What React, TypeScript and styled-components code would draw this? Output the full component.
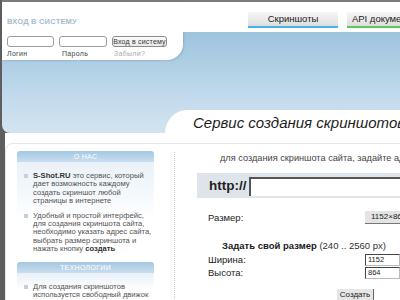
import styled, { createGlobalStyle } from 'styled-components';

const GlobalStyle = createGlobalStyle`
  html, body {
    margin: 0;
    padding: 0;
    background: #5e5e5e;
  }
  body {
    width: 400px;
    height: 300px;
    overflow: hidden;
    font-family: "Liberation Sans", Arial, sans-serif;
  }
`;

//#region Header
const Page = styled.div`
  margin-left: 2px;
  width: 398px;
`;

const Header = styled.header`
  height: 131px;
  border-top: 2px solid #7b7b7b;
  background: linear-gradient(180deg, #8db8d6 0%, #a6c9e1 35%, #c4dbec 75%, #d3e4f0 100%);
  border-bottom-left-radius: 8px;
  display: flex;
  flex-direction: column;
`;

const TopRow = styled.div`
  display: flex;
  align-items: flex-start;
`;

const LoginPanel = styled.div`
  width: 181px;
  height: 58px;
  padding: 16px 0 0 5px;
  box-sizing: border-box;
  background: #fff;
  border-bottom-right-radius: 16px;
  box-shadow: 1px 1px 2px rgba(90, 120, 150, 0.25);
`;

const LoginTitle = styled.div`
  font-size: 7.5px;
  font-weight: bold;
  color: #a7bccc;
  text-transform: uppercase;
  letter-spacing: 0.2px;
  line-height: 8px;
`;

const LoginRow = styled.div`
  display: flex;
  gap: 5px;
  margin-top: 10px;
`;

const Field = styled.div<{ $w: number }>`
  width: ${p => p.$w}px;
  display: flex;
  flex-direction: column;
`;

const SmallInput = styled.div`
  height: 9px;
  border: 1px solid #9c9c9c;
  border-radius: 3px;
  background: #fff;
`;

const LoginButton = styled.div`
  height: 9px;
  border: 1px solid #8c8c8c;
  border-radius: 3px;
  background: linear-gradient(#fbfbfb, #e9e9e9);
  font-size: 7px;
  line-height: 9px;
  color: #333;
  text-align: center;
  letter-spacing: 0.2px;
`;

const FieldLabel = styled.div<{ $muted?: boolean; $indent?: number }>`
  margin-top: 3px;
  padding-left: ${p => p.$indent ?? 0}px;
  font-size: 7px;
  line-height: 8px;
  color: ${p => (p.$muted ? '#a9a9a9' : '#444')};
  letter-spacing: 0.3px;
`;

const NavBar = styled.nav`
  flex: 1;
  height: 30px;
  background: #fff;
  display: flex;
  gap: 9px;
  padding: 10px 0 0 65px;
  box-sizing: border-box;
  overflow: hidden;
`;

const Tab = styled.div<{ $line: string }>`
  flex: none;
  width: 90px;
  height: 14px;
  background: linear-gradient(#f7f7f7, #dedede);
  border-bottom: 2px solid ${p => p.$line};
  font-size: 9.5px;
  line-height: 14px;
  color: #222;
  text-align: center;
  white-space: nowrap;
`;

const TitleTab = styled.div`
  margin: auto 0 0 163px;
  height: 23px;
  background: #fff;
  border-top-left-radius: 22px 23px;
  padding-left: 28px;
  font-size: 15px;
  font-style: italic;
  line-height: 25px;
  color: #1d1d1d;
  white-space: nowrap;
  overflow: hidden;
`;
//#endregion

//#region Main
const Main = styled.main`
  margin-left: 3px;
  background: #fff;
  padding-top: 10px;
  height: 167px;
  box-sizing: border-box;
`;

const MainBox = styled.div`
  display: flex;
  border-top: 1px solid #e3e8ed;
  border-left: 1px solid #e3e8ed;
  border-top-left-radius: 8px;
  height: 100%;
`;

const Sidebar = styled.aside`
  width: 168px;
  padding: 7px 0 0 11px;
  box-sizing: border-box;
`;

const SideBox = styled.section`
  width: 137px;
  margin-bottom: 5px;
`;

const SideHead = styled.div`
  height: 11px;
  border-radius: 3px 3px 0 0;
  background: linear-gradient(#a4c7e2, #c9def0);
  color: #fff;
  font-size: 7px;
  line-height: 11px;
  text-align: center;
  letter-spacing: 0.3px;
`;

const SideBody = styled.ul`
  margin: 0;
  list-style: none;
  padding: 10px 0 3px 7px;
  background: linear-gradient(#e9f1f8, #fff 60%);
`;

const SideItem = styled.li`
  display: flex;
  gap: 5px;
  margin-bottom: 6px;
  font-size: 7.6px;
  line-height: 8.4px;
  color: #525252;
  &:last-child {
    margin-bottom: 0;
  }
  &::before {
    content: '';
    flex: none;
    width: 4px;
    height: 4px;
    margin-top: 2px;
    background: #c6d0da;
  }
  b {
    color: #333;
  }
`;

const Content = styled.div`
  flex: 1;
  margin-top: 8px;
  border-left: 1px dotted #c9c9c9;
  overflow: hidden;
`;

const Intro = styled.p`
  margin: 0;
  padding: 1px 0 0 45px;
  font-size: 9.2px;
  line-height: 11px;
  color: #444;
  white-space: nowrap;
`;

const UrlBar = styled.div`
  margin: 9px 0 0 22px;
  height: 25px;
  background: #dfe4ea;
  display: flex;
  align-items: center;
  padding-left: 12px;
  gap: 3px;
`;

const UrlPrefix = styled.span`
  font-size: 13.5px;
  font-weight: bold;
  color: #1f1f1f;
`;

const UrlInput = styled.div`
  flex: 1;
  height: 17px;
  margin-top: 2px;
  background: #fff;
  border-top: 2px solid #555;
  border-left: 2px solid #555;
`;

const Form = styled.div`
  padding: 13px 0 0 33px;
  font-size: 9.5px;
  color: #222;
`;

const Row = styled.div<{ $gap?: number }>`
  display: grid;
  grid-template-columns: 157px 1fr;
  align-items: center;
  height: 13px;
  margin-top: ${p => p.$gap ?? 0}px;
`;

const SizeButton = styled.div`
  width: 50px;
  height: 12px;
  background: #e4e4e4;
  border-right: 1px solid #777;
  border-bottom: 1px solid #777;
  font-size: 8px;
  line-height: 12px;
  padding-left: 6px;
  color: #222;
  white-space: nowrap;
`;

const Custom = styled.div`
  margin: 16px 0 0 14px;
  line-height: 12px;
  color: #333;
  white-space: nowrap;
  b {
    color: #1a1a1a;
  }
`;

const NumInput = styled.div`
  height: 10px;
  border: 1px solid #bbb;
  border-top-color: #444;
  border-left-color: #444;
  background: #fff;
  font-size: 7.5px;
  line-height: 10px;
  padding-left: 2px;
`;

const CreateButton = styled.div`
  margin: 10px 0 0 129px;
  width: 36px;
  height: 12px;
  background: #e6e6e6;
  border-right: 1px solid #666;
  font-size: 8px;
  line-height: 12px;
  text-align: center;
  color: #222;
`;
//#endregion

export default function App() {
  return (
    <Page>
      <GlobalStyle />
      <Header>
        <TopRow>
          <LoginPanel>
            <LoginTitle>Вход в систему</LoginTitle>
            <LoginRow>
              <Field $w={47}>
                <SmallInput />
                <FieldLabel>Логин</FieldLabel>
              </Field>
              <Field $w={48}>
                <SmallInput />
                <FieldLabel $indent={3}>Пароль</FieldLabel>
              </Field>
              <Field $w={55}>
                <LoginButton>Вход в систему</LoginButton>
                <FieldLabel $muted $indent={2}>Забыли?</FieldLabel>
              </Field>
            </LoginRow>
          </LoginPanel>
          <NavBar>
            <Tab $line="#48b2e6">Скриншоты</Tab>
            <Tab $line="#5cc85a">API документация</Tab>
          </NavBar>
        </TopRow>
        <TitleTab>Сервис создания скриншотов сайтов</TitleTab>
      </Header>

      <Main>
        <MainBox>
          <Sidebar>
            <SideBox>
              <SideHead>О НАС</SideHead>
              <SideBody>
                <SideItem>
                  <span><b>S-Shot.RU</b> это сервис, который дает возможность каждому создать скриншот любой страницы в интернете</span>
                </SideItem>
                <SideItem>
                  <span>Удобный и простой интерфейс, для создания скриншота сайта, необходимо указать адрес сайта, выбрать размер скриншота и нажать кнопку <b>создать</b></span>
                </SideItem>
              </SideBody>
            </SideBox>
            <SideBox>
              <SideHead>ТЕХНОЛОГИИ</SideHead>
              <SideBody>
                <SideItem>
                  <span>Для создания скриншотов используется свободный движок</span>
                </SideItem>
              </SideBody>
            </SideBox>
          </Sidebar>

          <Content>
            <Intro>для создания скриншота сайта, задайте адрес страницы</Intro>
            <UrlBar>
              <UrlPrefix>http://</UrlPrefix>
              <UrlInput />
            </UrlBar>
            <Form>
              <Row>
                <span>Размер:</span>
                <SizeButton>1152×864 ▾</SizeButton>
              </Row>
              <Custom>
                <b>Задать свой размер</b> (240 .. 2560 px)
              </Custom>
              <Row $gap={1}>
                <span>Ширина:</span>
                <NumInput>1152</NumInput>
              </Row>
              <Row>
                <span>Высота:</span>
                <NumInput>864</NumInput>
              </Row>
              <CreateButton>Создать</CreateButton>
            </Form>
          </Content>
        </MainBox>
      </Main>
    </Page>
  );
}
